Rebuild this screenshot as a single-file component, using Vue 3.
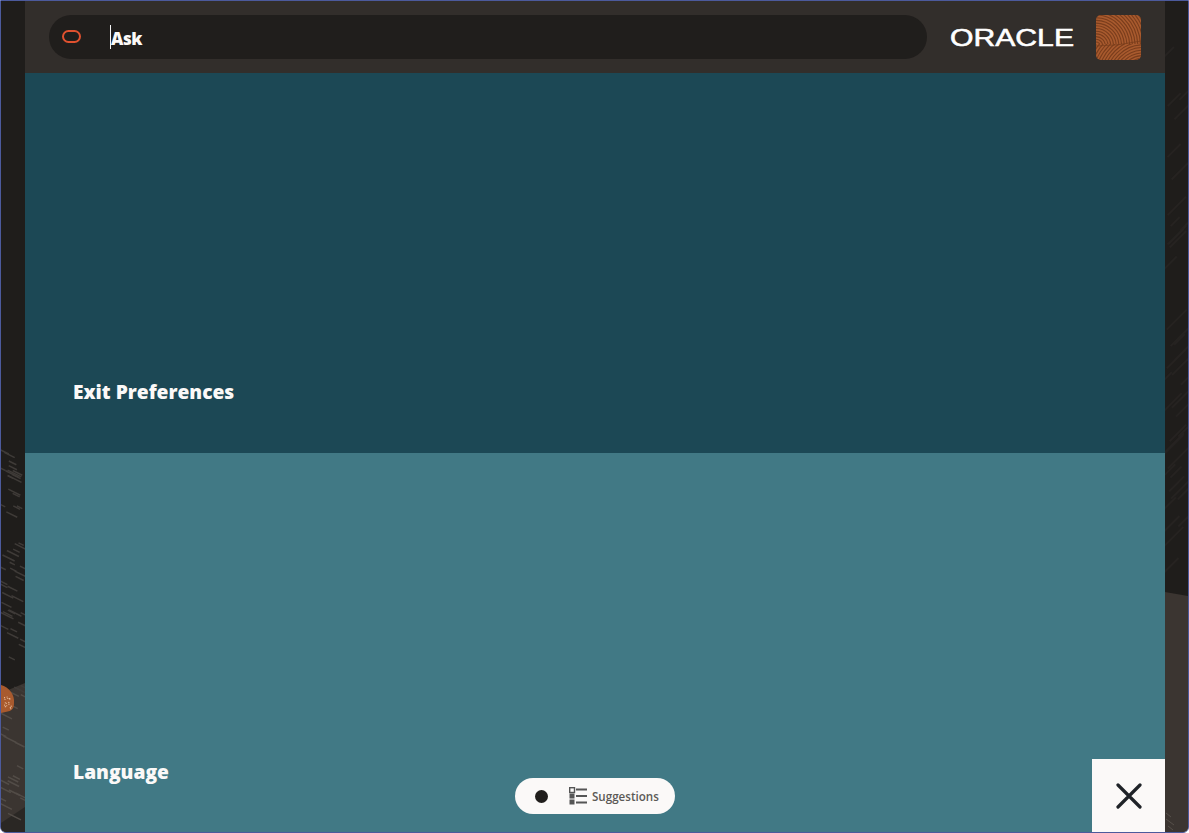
<template>
  <div class="shell">
    <div class="side">
      <svg class="deco" viewBox="0 0 24 831" preserveAspectRatio="none">
        <rect width="24" height="831" fill="#1f1d1b" />
        <path d="M0 692 L24 682 L24 831 L0 831 Z" fill="#3b3531" />
        <path d="M0 831 L0 822 L24 806 L24 831 Z" fill="#2a2724" />
        <line
          v-for="(s, i) in leftStripes"
          :key="i"
          :x1="s.x"
          :y1="s.y"
          :x2="s.x + s.len"
          :y2="s.y + s.len * 0.5"
          :stroke="s.y > 690 ? '#524c47' : '#3f3b38'"
          stroke-width="1.5"
        />
        <path d="M0 684 C8 686 14 694 13 702 C13 712 6 710 0 712 Z" fill="#a85a2e" />
        <circle v-for="(d, i) in dots" :key="i" :cx="d.x" :cy="d.y" r="0.6" fill="#eec9a8" />
      </svg>
    </div>

    <div class="main">
      <header class="topbar">
        <div class="search">
          <span class="oval"></span>
          <span class="caret"></span>
          <span class="ask">Ask</span>
        </div>
        <svg class="logo" viewBox="0 0 126 30">
          <text
            x="1"
            y="23.5"
            textLength="124"
            lengthAdjust="spacingAndGlyphs"
            class="logo-text"
          >ORACLE</text>
        </svg>
        <svg class="avatar" viewBox="0 0 45 45">
          <defs>
            <clipPath id="wood-top"><rect width="45" height="29" /></clipPath>
            <clipPath id="wood-low"><rect y="29" width="45" height="16" /></clipPath>
            <clipPath id="wood-box"><rect width="45" height="45" rx="5" /></clipPath>
          </defs>
          <g clip-path="url(#wood-box)">
            <rect width="45" height="45" fill="#a85a2e" />
            <g clip-path="url(#wood-top)">
              <circle
                v-for="r in rings"
                :key="r"
                cx="0"
                cy="31"
                :r="r"
                fill="none"
                stroke="#7a3d1c"
                stroke-width="1.1"
              />
            </g>
            <g clip-path="url(#wood-low)">
              <circle
                v-for="r in lowRings"
                :key="'l' + r"
                cx="47"
                cy="64"
                :r="r"
                fill="none"
                stroke="#7a3d1c"
                stroke-width="1.1"
              />
            </g>
            <path d="M0 31 Q22 31 45 26" fill="none" stroke="#7a3d1c" stroke-width="0.8" />
          </g>
        </svg>
      </header>

      <section class="tile tile-dark"><h2>Exit Preferences</h2></section>
      <section class="tile tile-light"><h2>Language</h2></section>

      <div class="pill">
        <span class="dot"></span>
        <svg class="list-icon" viewBox="0 0 18 18">
          <rect x="0.7" y="0.7" width="4.8" height="4.8" fill="none" stroke="#555" stroke-width="1.4" />
          <rect x="0.5" y="6.5" width="5" height="5" fill="#555" />
          <rect x="0.5" y="12.5" width="5" height="5" fill="#555" />
          <path d="M7 2.5H18M7 9H18M7 15.5H18" stroke="#555" stroke-width="1.8" />
        </svg>
        <span class="pill-text">Suggestions</span>
      </div>

      <button class="close">
        <svg viewBox="0 0 26 26">
          <path d="M2 2L24 24M24 2L2 24" stroke="#1f2328" stroke-width="3.2" stroke-linecap="round" />
        </svg>
      </button>
    </div>

    <div class="side">
      <svg class="deco" viewBox="0 0 23 831" preserveAspectRatio="none">
        <rect width="23" height="831" fill="#1f1d1b" />
        <path d="M0 591 L23 595 L23 831 L0 831 Z" fill="#3b3531" />
        <line
          v-for="(s, i) in rightStripes"
          :key="i"
          :x1="s.x"
          :y1="s.y"
          :x2="s.x + s.len"
          :y2="s.y - s.len"
          stroke="#262321"
          stroke-width="2"
        />
        <path d="M1 812L6 816M1 818L9 824M3 825L8 829" stroke="#57514b" stroke-width="1" />
      </svg>
    </div>
  </div>
</template>

<script setup>
// small seeded generator so the background texture stays the same every load
function rng(seed) {
  let s = seed
  return () => {
    s = (s * 9301 + 49297) % 233280
    return s / 233280
  }
}

const r1 = rng(7)
const leftStripes = Array.from({ length: 70 }, () => ({
  x: r1() * 24 - 4,
  y: 440 + r1() * 385,
  len: 5 + r1() * 9,
}))

const r2 = rng(23)
const rightStripes = Array.from({ length: 40 }, () => ({
  x: r2() * 20 - 4,
  y: 50 + r2() * 530,
  len: 8 + r2() * 14,
}))

const r3 = rng(41)
const dots = Array.from({ length: 16 }, () => ({
  x: 3 + r3() * 8,
  y: 694 + r3() * 14,
}))

const rings = Array.from({ length: 20 }, (_, i) => 4 + i * 2.7)
const lowRings = Array.from({ length: 20 }, (_, i) => 18 + i * 2.7)
</script>

<style scoped>
.shell {
  box-sizing: border-box;
  width: 1189px;
  height: 833px;
  border: 1px solid #4c5a9c;
  border-radius: 0 0 6px 6px;
  display: grid;
  grid-template-columns: 24px 1140px 1fr;
  overflow: hidden;
}
.side {
  min-width: 0;
}
.deco {
  display: block;
  width: 100%;
  height: 100%;
}
.main {
  position: relative;
  display: grid;
  grid-template-rows: 72px 380px 1fr;
  min-height: 0;
}
.topbar {
  display: flex;
  align-items: center;
  background: #322e2b;
  padding: 0 24px;
}
.search {
  display: flex;
  align-items: center;
  width: 878px;
  height: 44px;
  border-radius: 22px;
  background: #201e1c;
  padding-left: 13px;
  box-sizing: border-box;
}
.oval {
  box-sizing: border-box;
  width: 19px;
  height: 13px;
  border: 2.4px solid #e0512f;
  border-radius: 7px;
  margin-top: -1px;
}
.caret {
  width: 1px;
  height: 24px;
  background: #f4f4f4;
  margin-left: 29px;
}
.ask {
  font-family: "Open Sans", sans-serif;
  font-weight: 800;
  font-size: 17px;
  letter-spacing: -0.4px;
  color: #fbf9f8;
  margin-top: 3px;
}
.logo {
  width: 126px;
  height: 30px;
  margin-left: 22px;
}
.logo-text {
  font-family: "Liberation Sans", sans-serif;
  font-size: 23.5px;
  fill: #fff;
  stroke: #fff;
  stroke-width: 0.55px;
}
.avatar {
  width: 45px;
  height: 45px;
  margin-left: 21px;
}
.tile {
  display: flex;
  align-items: flex-end;
  padding: 0 0 49px 48px;
  min-height: 0;
}
.tile-dark {
  background: #1c4855;
}
.tile-light {
  background: #417985;
  padding-bottom: 48px;
}
.tile h2 {
  margin: 0;
  font-family: "Open Sans", sans-serif;
  font-weight: 800;
  font-size: 19.2px;
  line-height: 24px;
  color: #fbf9f8;
}
.pill {
  position: absolute;
  left: 490px;
  bottom: 18px;
  width: 160px;
  height: 36px;
  box-sizing: border-box;
  border-radius: 18px;
  background: #fbf9f8;
  display: flex;
  align-items: center;
  padding-left: 20px;
}
.dot {
  width: 13px;
  height: 13px;
  border-radius: 50%;
  background: #201e1c;
}
.list-icon {
  width: 18px;
  height: 18px;
  margin-left: 21px;
}
.pill-text {
  margin-left: 5px;
  font-family: "Open Sans", sans-serif;
  font-weight: 600;
  font-size: 11.6px;
  color: #5b5956;
}
.close {
  position: absolute;
  right: 0;
  bottom: 0;
  width: 73px;
  height: 73px;
  border: 0;
  padding: 0;
  background: #fbf9f8;
  display: flex;
  align-items: center;
  justify-content: center;
}
.close svg {
  width: 26px;
  height: 26px;
}
</style>
